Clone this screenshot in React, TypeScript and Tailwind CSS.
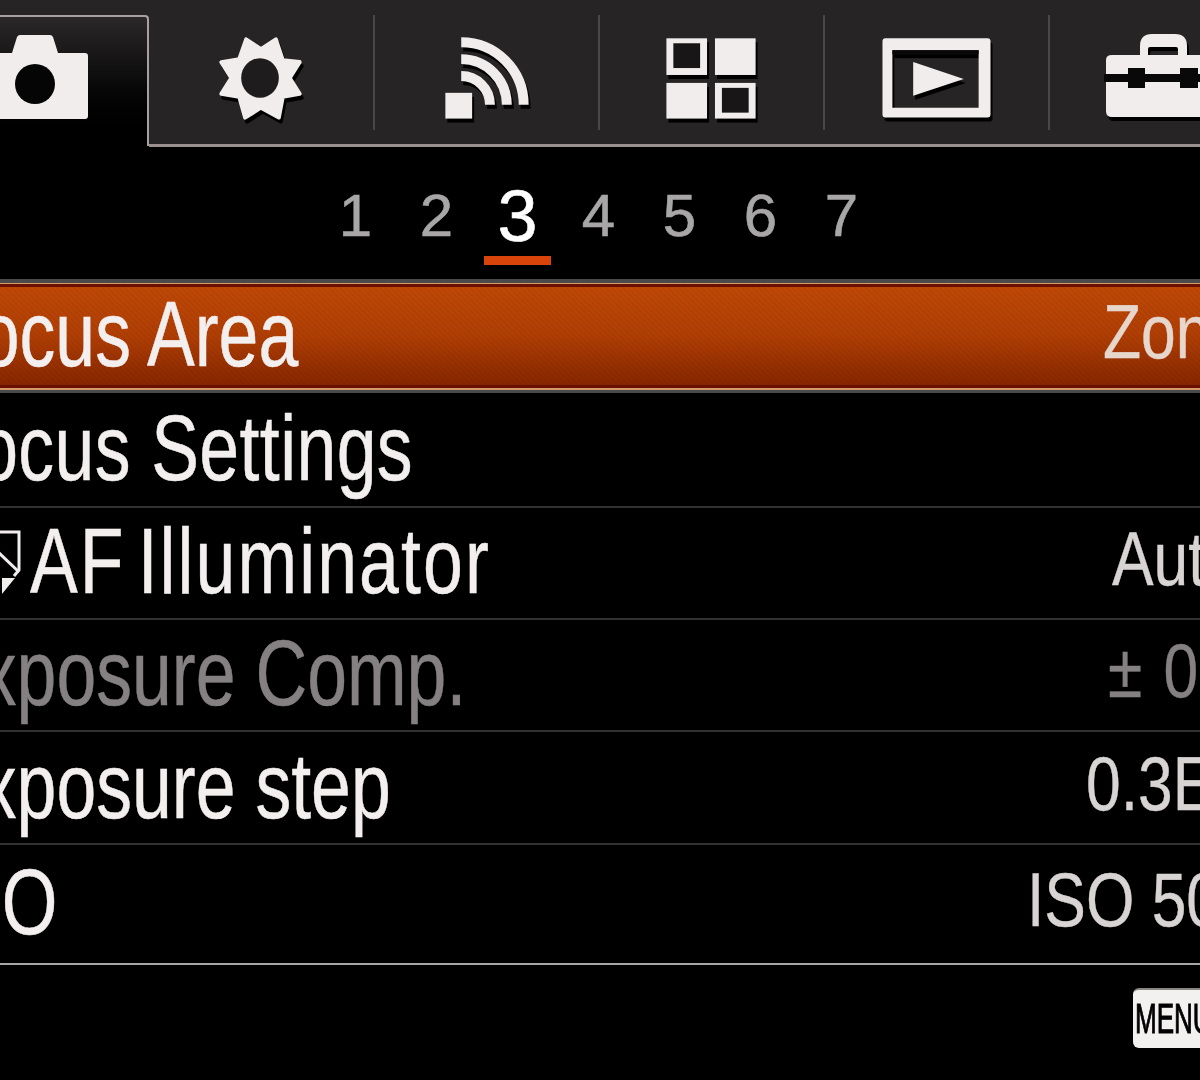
const INK = "#f1eded";

function Sep({ children, w, box }: { children: React.ReactNode; w: string; box: string }) {
  return (
    <div className={`${w} h-[115px] mt-[15px] shrink-0 border-r-2 border-[#4a4748]`}>
      <svg viewBox={box} className="w-full h-full block overflow-visible drop-shadow-[2px_4px_0_#000]">
        {children}
      </svg>
    </div>
  );
}

function TabBar() {
  return (
    <div className="flex h-[148px] bg-black">
      <div className="w-[149px] shrink-0 h-[146px] pt-[15px] bg-[#272425]">
        <div className="h-[131px] rounded-tr-[4px] border-t-[2px] border-r-[2px] border-[#a89f9f] bg-gradient-to-b from-[#2b2829] via-[#0c0b0b] to-[#000000]">
          <svg viewBox="0 17 147 129" className="w-[147px] h-[129px] block">
            <path d="M-20 53H12L17 37Q18 35 20 35H50Q52 35 53 37L58 53H85Q88 53 88 56V116Q88 119 85 119H-20Z" fill={INK} />
            <ellipse cx="35" cy="84" rx="20" ry="20" fill="#060505" />
          </svg>
        </div>
      </div>
      <div className="flex-1 flex h-[147px] bg-[#272425] border-b-[3px] border-[#9a9090] overflow-hidden">
        <Sep w="w-[226px]" box="149 15 226 115">
          <polygon
            points="277,39 284,60 301,62 291,78 301,94 284,97 280,118 262,108 246,118 240,97 222,94 232,78 222,62 240,59 247,39 262,49"
            fill={INK}
            stroke={INK}
            strokeWidth="4"
            strokeLinejoin="round"
          />
          <ellipse cx="261" cy="78" rx="19" ry="20" fill="#1f1c1d" />
        </Sep>
        <Sep w="w-[225px]" box="375 15 225 115">
          <rect x="446" y="93" width="27" height="26" fill={INK} />
          <g fill="none" stroke={INK} strokeWidth="10">
            <path d="M462 42A63 63 0 0 1 525 105" />
            <path d="M462 59A46 46 0 0 1 508 105" />
            <path d="M462 76A29 29 0 0 1 491 105" />
          </g>
        </Sep>
        <Sep w="w-[225px]" box="600 15 225 115">
          <rect x="667" y="38" width="41" height="37" fill={INK} />
          <rect x="674" y="43" width="27" height="25" fill="#181617" />
          <rect x="716" y="38" width="41" height="37" fill={INK} />
          <rect x="667" y="83" width="41" height="36" fill={INK} />
          <rect x="716" y="83" width="41" height="36" fill={INK} />
          <rect x="723" y="88" width="27" height="25" fill="#181617" />
        </Sep>
        <Sep w="w-[225px]" box="825 15 225 115">
          <path
            fillRule="evenodd"
            d="M886 38H989Q992 38 992 41V115Q992 118 989 118H886Q883 118 883 115V41Q883 38 886 38ZM893 50V108H980V50Z"
            fill={INK}
          />
          <rect x="893" y="50" width="87" height="4" fill="#0a0909" />
          <polygon points="914,62 965,79 914,96" fill={INK} />
        </Sep>
        <div className="flex-1 h-[115px] mt-[15px]">
          <svg viewBox="1050 15 150 115" className="w-full h-full block overflow-visible drop-shadow-[2px_4px_0_#000]">
            <path
              fillRule="evenodd"
              d="M1140 55V46Q1140 34 1152 34H1175Q1187 34 1187 46V55H1230V117H1112Q1106 117 1106 111V60Q1106 55 1112 55ZM1148 55H1178V49Q1178 47 1176 47H1150Q1148 47 1148 49Z"
              fill={INK}
            />
            <rect x="1104" y="74" width="130" height="8" fill="#0a0909" />
            <rect x="1128" y="68" width="17" height="20" fill="#0a0909" />
            <rect x="1180" y="68" width="18" height="20" fill="#0a0909" />
          </svg>
        </div>
      </div>
    </div>
  );
}

function Pages() {
  const items = ["1", "2", "3", "4", "5", "6", "7"];
  return (
    <div className="h-[131px] flex pl-[315px] pt-[34px]">
      {items.map((n) =>
        n === "3" ? (
          <div key={n} className="w-[81px] flex flex-col items-center">
            <span className="text-[72px] leading-[68px] text-white [-webkit-text-stroke:0.6px_#ffffff]">{n}</span>
            <span className="w-[67px] h-[9px] bg-[#d9440a] mt-[6px]" />
          </div>
        ) : (
          <div
            key={n}
            className="w-[81px] text-center text-[60px] leading-[68px] text-[#a8a6a6] [-webkit-text-stroke:0.6px_#a8a6a6]"
          >
            {n}
          </div>
        ),
      )}
    </div>
  );
}

function Label({ text, off, dim, wide }: { text: string; off: string; dim?: boolean; wide?: string }) {
  return (
    <span
      className={`${off} ${wide ?? ""} ${dim ? "text-[#858182]" : "text-[#f3efef]"} inline-block shrink-0 origin-left scale-x-[0.77] text-[93px] leading-none whitespace-nowrap pb-[3px] [-webkit-text-stroke:0.5px_currentColor]`}
    >
      {text}
    </span>
  );
}

function Value({ text, w, dim, color, wide }: { text: string; w: string; dim?: boolean; color?: string; wide?: string }) {
  return (
    <span className={`${w} ml-auto shrink-0 overflow-visible`}>
      <span
        className={`${dim ? "text-[#858182]" : color ?? "text-[#d8d4d4]"} ${wide ?? ""} inline-block origin-left scale-x-[0.82] text-[76px] leading-none whitespace-nowrap pb-[8px] [-webkit-text-stroke:0.4px_currentColor]`}
      >
        {text}
      </span>
    </span>
  );
}

function Row({ h, line, children }: { h: string; line: string; children: React.ReactNode }) {
  return <div className={`${h} ${line} border-b-2 flex items-center overflow-hidden`}>{children}</div>;
}

function Selected() {
  return (
    <div className="h-[114px] border-t-4 border-b-[3px] border-[#4a4a4a]">
      <div className="h-full border-t border-b-2 border-[#d49a6a]">
        <div className="h-full border-t-[3px] border-b-[3px] border-[#6a1000]">
          <div className="h-full flex items-center overflow-hidden bg-[repeating-linear-gradient(45deg,rgba(0,0,0,0.04)_0_2px,transparent_2px_4px),linear-gradient(to_bottom,#bf4806,#b03e04_50%,#862600)]">
            <Label text="Focus Area" off="-ml-[64px]" />
            <Value text="Zone" w="w-[97px]" color="text-[#e6d6cc]" />
          </div>
        </div>
      </div>
    </div>
  );
}

export default function App() {
  return (
    <div className="w-[1200px] h-[1080px] overflow-hidden bg-black font-['Liberation_Sans',Arial,sans-serif]">
      <TabBar />
      <Pages />
      <Selected />
      <Row h="h-[115px]" line="border-[#333132]">
        <Label text="Focus Settings" off="-ml-[66px]" wide="tracking-[0.5px]" />
      </Row>
      <Row h="h-[112px]" line="border-[#333132]">
        <svg viewBox="0 0 24 66" className="w-[24px] h-[66px] shrink-0 mr-[6px]" fill="none" stroke="#f1eded" strokeWidth="3">
          <path d="M-4 2H19V40L14 46" />
          <path d="M-2 22L19 42" />
          <path d="M2 48H15L2 64Z" fill="#f1eded" stroke="none" />
        </svg>
        <Label text="AF Illuminator" off="" wide="tracking-[2.7px] [word-spacing:-13px]" />
        <Value text="Auto" w="w-[88px]" />
      </Row>
      <Row h="h-[112px]" line="border-[#333132]">
        <Label text="Exposure Comp." off="-ml-[67px]" dim />
        <Value text="±0.0" w="w-[92px]" dim wide="tracking-[26px]" />
      </Row>
      <Row h="h-[113px]" line="border-[#333132]">
        <Label text="Exposure step" off="-ml-[67px]" />
        <Value text="0.3EV" w="w-[114px]" />
      </Row>
      <Row h="h-[120px]" line="border-[#a9a5a5]">
        <Label text="ISO" off="-ml-[66px]" />
        <Value text="ISO 50" w="w-[173px]" />
      </Row>
      <div className="flex justify-end pt-[23px]">
        <div className="w-[67px] h-[60px] shrink-0 rounded-l-[6px] bg-[#f3f0f0] border-t-2 border-[#8a8686] flex items-center pl-[2px] overflow-hidden">
          <span className="inline-block origin-left scale-x-[0.62] text-[42px] leading-none text-black whitespace-nowrap [-webkit-text-stroke:1px_#000000]">
            MENU
          </span>
        </div>
      </div>
    </div>
  );
}
